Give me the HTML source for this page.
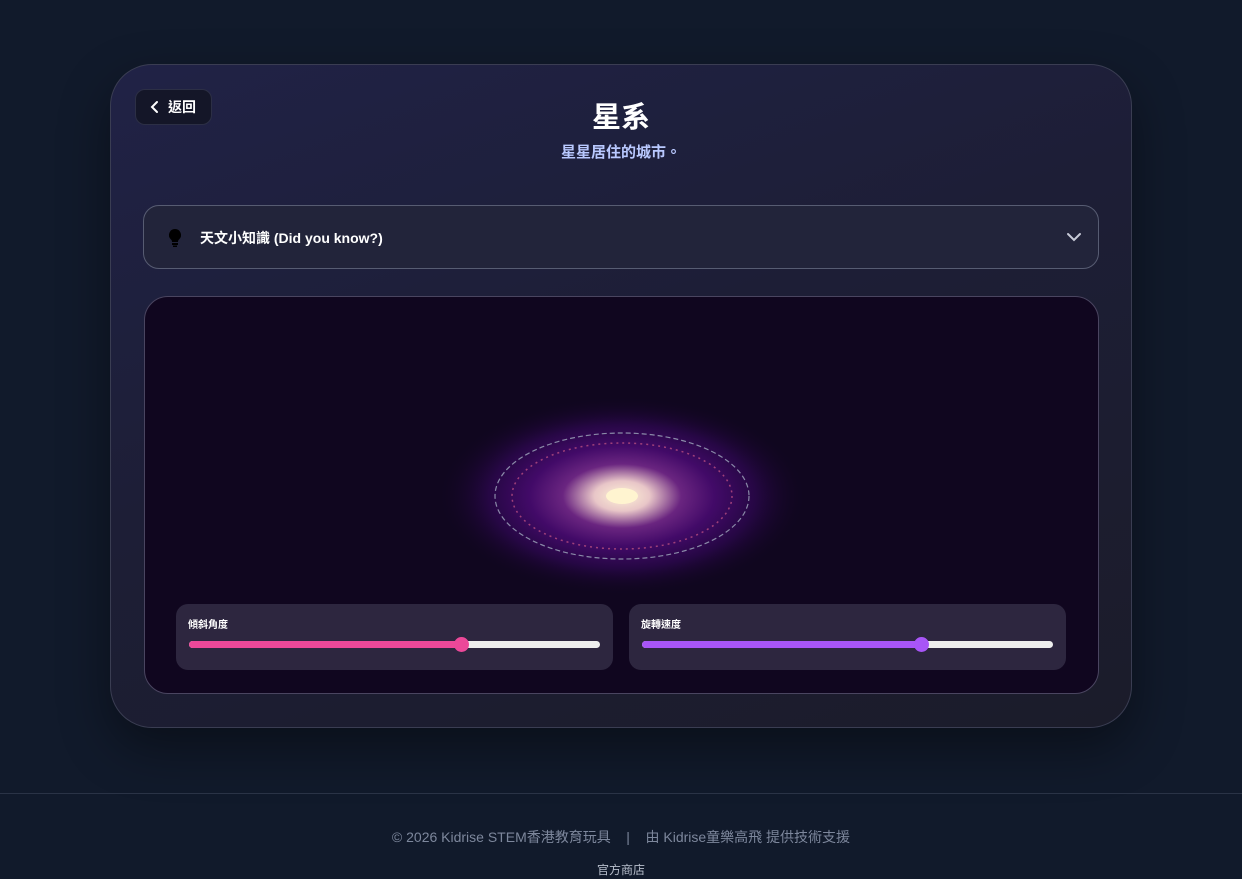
<!DOCTYPE html>
<html><head><meta charset="utf-8"><style>
*{margin:0;padding:0;box-sizing:border-box}
body{width:1242px;height:879px;background:#111a2b;font-family:"Liberation Sans","Noto Sans CJK TC",sans-serif;color:#fff;position:relative;overflow:hidden}
.card{position:absolute;left:110px;top:64px;width:1022px;height:664px;border-radius:42px;background:linear-gradient(160deg,#202246 0%,#1d1e36 45%,#1b1c2a 100%);border:1px solid #3a3d52;box-shadow:0 20px 50px rgba(0,0,0,.4)}
.back{position:absolute;left:135px;top:89px;width:77px;height:36px;border-radius:10px;background:#141628;border:1px solid #2c2f45;font-size:14px;font-weight:bold;display:flex;align-items:center;padding-left:14px;gap:8px}
h1{position:absolute;left:0;width:1242px;top:94px;text-align:center;font-size:29px;font-weight:bold}
.sub{position:absolute;left:0;width:1242px;top:141px;text-align:center;font-size:15px;color:#b9c9ff;font-weight:bold}
.acc{position:absolute;left:143px;top:205px;width:956px;height:64px;border-radius:16px;background:#22243a;border:1px solid #575c72}
.acc .t{position:absolute;left:56px;top:22px;font-size:14px;font-weight:bold}
.canvas{position:absolute;left:144px;top:296px;width:955px;height:398px;border-radius:24px;background:#10061f;border:1px solid #4a4560;overflow:hidden}
.panel{position:absolute;top:307px;width:437px;height:66px;border-radius:12px;background:#2d263f}
.panel .l{position:absolute;left:12px;top:12px;font-size:10px;font-weight:bold}
.track{position:absolute;left:13px;top:37px;width:411px;height:7px;border-radius:4px;background:#eee}
.fill{position:absolute;left:0;top:0;height:7px;border-radius:4px}
.thumb{position:absolute;top:-4px;width:15px;height:15px;border-radius:50%}
.foot{position:absolute;left:0;top:793px;width:1242px;border-top:1px solid #2a3346}
.f1{position:absolute;left:0;width:1242px;top:827px;text-align:center;font-size:14px;color:#7d879c}
.f2{position:absolute;left:0;width:1242px;top:861px;text-align:center;font-size:12px;color:#b8bfcc}
</style></head><body>
<div class="card"></div>
<div class="back"><svg width="10" height="14" viewBox="0 0 10 14"><path d="M7 2L2 7l5 5" stroke="#fff" stroke-width="2" fill="none" stroke-linecap="round"/></svg>返回</div>
<h1>星系</h1>
<div class="sub">星星居住的城市。</div>
<div class="acc">
<svg style="position:absolute;left:22px;top:22px" width="18" height="20" viewBox="0 0 18 20"><path d="M9 1a6 6 0 0 0-4 10.5c.8.8 1 1.5 1 2.5h6c0-1 .2-1.7 1-2.5A6 6 0 0 0 9 1z" fill="#000"/><rect x="6" y="15" width="6" height="2" fill="#000"/><rect x="7" y="17.5" width="4" height="1.5" fill="#000"/></svg>
<div class="t">天文小知識 (Did you know?)</div>
<svg style="position:absolute;right:16px;top:25px" width="16" height="12" viewBox="0 0 16 12"><path d="M2 3l6 6 6-6" stroke="#c8cbd8" stroke-width="2" fill="none" stroke-linecap="round"/></svg>
</div>
<div class="canvas">
<svg width="955" height="398" style="position:absolute;left:0;top:0">
<defs><radialGradient id="g" cx="50%" cy="50%" r="50%">
<stop offset="0" stop-color="#fff3d6"/><stop offset=".15" stop-color="#e8c6c8"/><stop offset=".32" stop-color="#6a2580"/><stop offset=".5" stop-color="#420a68"/><stop offset=".72" stop-color="#260744"/><stop offset="1" stop-color="#10061f" stop-opacity="0"/></radialGradient></defs>
<ellipse cx="477" cy="199" rx="185" ry="100" fill="url(#g)"/>
<ellipse cx="477" cy="199" rx="127" ry="63" fill="none" stroke="#8a8aa8" stroke-width="1.2" stroke-dasharray="5 3"/>
<ellipse cx="477" cy="199" rx="110" ry="53" fill="none" stroke="#a0407a" stroke-width="1.5" stroke-dasharray="2 4"/>
<ellipse cx="477" cy="199" rx="16" ry="8" fill="#fff4d0"/>
</svg>
<div class="panel" style="left:31px"><div class="l">傾斜角度</div><div class="track"><div class="fill" style="width:272px;background:#ec4899"></div><div class="thumb" style="left:265px;background:#ec4899"></div></div></div>
<div class="panel" style="left:484px"><div class="l">旋轉速度</div><div class="track"><div class="fill" style="width:279px;background:#a855f7"></div><div class="thumb" style="left:272px;background:#a855f7"></div></div></div>
</div>
<div class="foot"></div>
<div class="f1">© 2026 Kidrise STEM香港教育玩具 &nbsp;&nbsp;&nbsp;| &nbsp;&nbsp;&nbsp;由 Kidrise童樂高飛 提供技術支援</div>
<div class="f2">官方商店</div>
</body></html>
